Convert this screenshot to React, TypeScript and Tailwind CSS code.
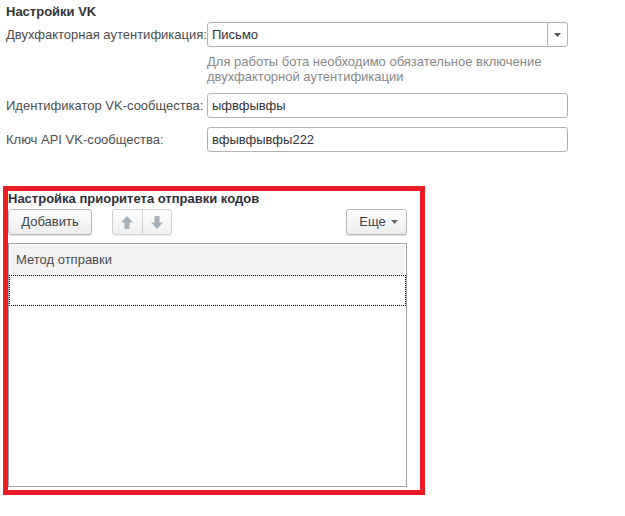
import React from "react";

const font = { fontFamily: '"Liberation Sans", Arial, sans-serif' };

function Field({ label, value, dropdown }: { label: string; value: string; dropdown?: boolean }) {
  return (
    <div className="flex items-center">
      <div className="w-[201px] shrink-0 text-[13px] text-[#4d4d4d]">{label}</div>
      <div className="flex h-[25px] w-[361px] items-center rounded-[3px] border border-[#b3b3b3] bg-white">
        <div className="flex-1 pl-[4px] text-[13px] text-[#333]">{value}</div>
        {dropdown && (
          <div className="flex h-full w-[20px] items-center justify-center border-l border-[#b3b3b3]">
            <svg width="7" height="4" viewBox="0 0 7 4">
              <path d="M0 0h7L3.5 4z" fill="#555" />
            </svg>
          </div>
        )}
      </div>
    </div>
  );
}

function Arrow({ up }: { up?: boolean }) {
  return (
    <svg width="12" height="13" viewBox="0 0 12 13" className={up ? "" : "rotate-180"}>
      <path d="M6 0L12 6.5H8.5V13h-5V6.5H0z" fill="#a9b0b6" />
    </svg>
  );
}

export default function App() {
  return (
    <div className="min-h-[516px] w-[625px] bg-white" style={font}>
      <div className="pl-[6px] pt-[3px]">
        <div className="text-[13px] font-bold leading-[17px] text-[#333]">Настройки VK</div>
        <div className="mt-[2px]">
          <Field label="Двухфакторная аутентификация:" value="Письмо" dropdown />
        </div>
        <div className="ml-[201px] mt-[7px] text-[13px] leading-[15px] text-[#888]">
          Для работы бота необходимо обязательное включение
          <br />
          двухфакторной аутентификации
        </div>
        <div className="mt-[9px]">
          <Field label="Идентификатор VK-сообщества:" value="ыфвфывфы" />
        </div>
        <div className="mt-[9px]">
          <Field label="Ключ API VK-сообщества:" value="вфывфывфы222" />
        </div>
      </div>

      <div className="ml-[3px] mt-[34px] h-[309px] w-[422px] border-[5px] border-[#ed1c24] bg-white pr-[13px]">
        <div className="-mt-[1px] text-[13px] font-bold leading-[17px] text-[#2f2f3a]">
          Настройка приоритета отправки кодов
        </div>
        <div className="mt-[2px] flex items-center">
          <button className="h-[26px] w-[84px] rounded-[3px] border border-[#b8b8b8] bg-gradient-to-b from-white to-[#ececec] text-[13px] text-[#444] shadow-[0_1px_1px_rgba(0,0,0,0.15)]">
            Добавить
          </button>
          <div className="ml-[20px] flex h-[26px] w-[60px] rounded-[3px] border border-[#d0d0d0] bg-gradient-to-b from-white to-[#f0f0f0] shadow-[0_1px_1px_rgba(0,0,0,0.08)]">
            <div className="flex flex-1 items-center justify-center border-r border-[#d0d0d0]">
              <Arrow up />
            </div>
            <div className="flex flex-1 items-center justify-center">
              <Arrow />
            </div>
          </div>
          <button className="ml-auto flex h-[26px] w-[61px] items-center justify-center gap-[5px] rounded-[3px] border border-[#b8b8b8] bg-gradient-to-b from-white to-[#ececec] pl-[4px] text-[13px] text-[#444] shadow-[0_1px_1px_rgba(0,0,0,0.15)]">
            Еще
            <svg width="7" height="4" viewBox="0 0 7 4">
              <path d="M0 0h7L3.5 4z" fill="#666" />
            </svg>
          </button>
        </div>
        <div className="mt-[8px] h-[244px] border border-[#a0a0a0] bg-white">
          <div className="m-[1px] mb-0 flex h-[29px] items-center bg-[#f2f2f2] pl-[6px] text-[13px] text-[#4d4d4d]">
            Метод отправки
          </div>
          <div className="mt-[1px] h-[31px] border border-dotted border-black"></div>
        </div>
      </div>
    </div>
  );
}
